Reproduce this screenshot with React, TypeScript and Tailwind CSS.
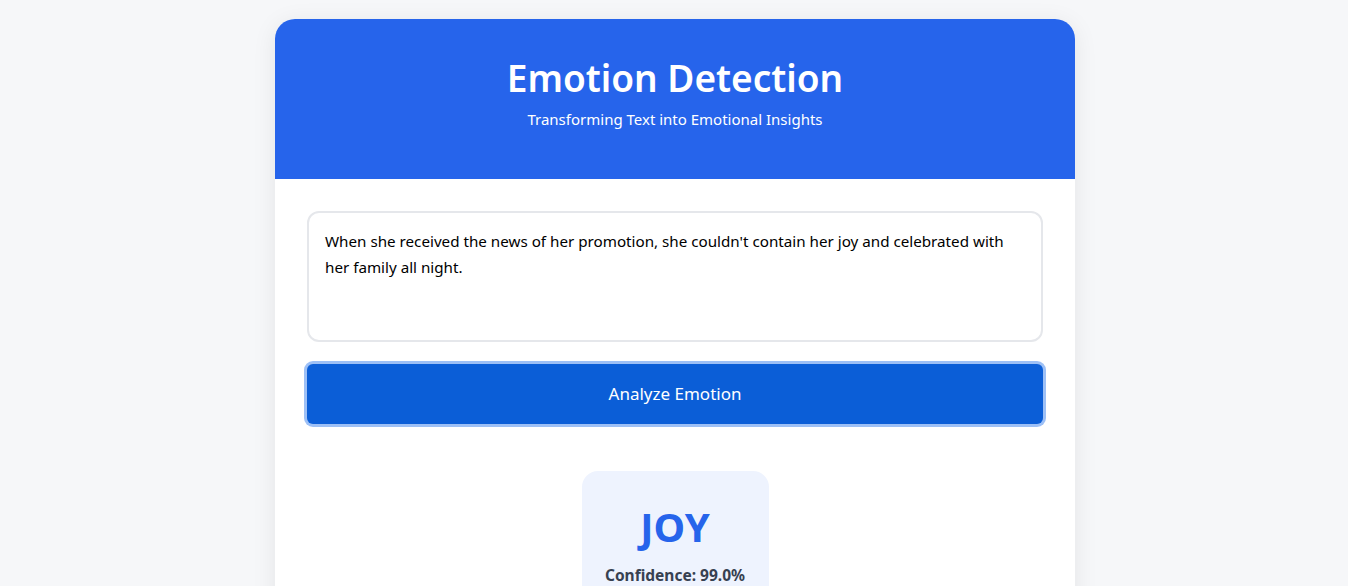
export default function App() {
  const text =
    "When she received the news of her promotion, she couldn't contain her joy and celebrated with her family all night."

  return (
    <div
      className="min-h-[586px] bg-[#f6f7f9] pt-[19px]"
      style={{ fontFamily: '"Noto Sans", "Open Sans", sans-serif' }}
    >
      <div className="mx-auto w-[800px] translate-x-[1px] overflow-hidden rounded-[20px] bg-white shadow-[0_4px_24px_rgba(0,0,0,0.08)]">
        <header className="flex h-[160px] flex-col items-center bg-[#2664eb] pt-[33px] text-white">
          <h1 className="text-[37px] font-semibold leading-[52px]">Emotion Detection</h1>
          <p className="mt-[4px] text-[15px] leading-[22px]">Transforming Text into Emotional Insights</p>
        </header>

        <main className="px-[32px] pt-[32px] pb-[40px]">
          <textarea
            defaultValue={text}
            className="block h-[131px] w-full resize-none rounded-[12px] border-2 border-[#e5e7eb] px-[16px] pt-[15px] text-[15.2px] leading-[26px] text-black outline-none"
          />

          <button
            type="button"
            className="mt-[22px] block h-[60px] w-full rounded-[6px] bg-[#0b5ed7] text-[17px] text-white ring-[3px] ring-[#9dc0f6]"
          >
            Analyze Emotion
          </button>

          <div className="mt-[47px] flex justify-center">
            <div className="flex w-[187px] flex-col items-center rounded-[16px] bg-[#eef3fe] pt-[30px] pb-[20px]">
              <div className="text-[40px] font-bold leading-[52px] text-[#2664eb]">JOY</div>
              <div className="mt-[11px] text-[15.5px] font-bold text-[#374151]">Confidence: 99.0%</div>
            </div>
          </div>
        </main>
      </div>
    </div>
  )
}
